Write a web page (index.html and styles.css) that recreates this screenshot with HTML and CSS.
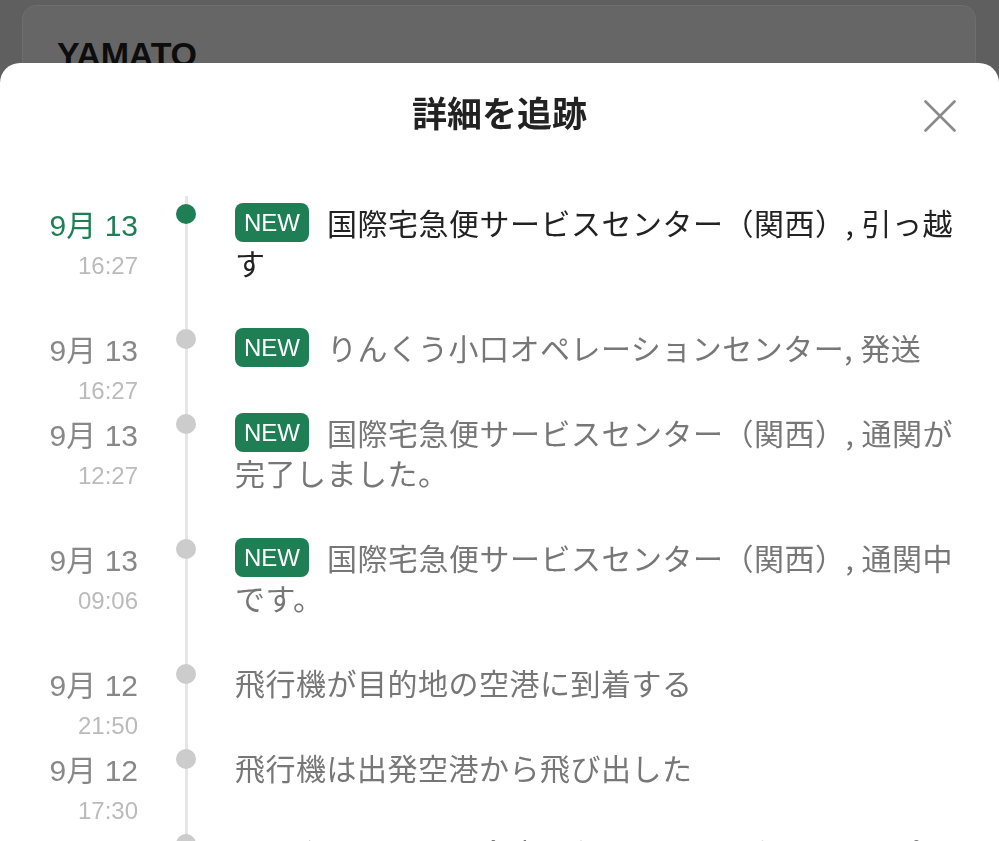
FILE: index.html
```html
<!DOCTYPE html>
<html lang="ja">
<head>
<meta charset="utf-8">
<title>詳細を追跡</title>
<link rel="stylesheet" href="styles.css">
</head>
<body>
<div class="page">
  <div class="card">
    <div class="brand">YAMATO</div>
  </div>
</div>

<div class="sheet">
  <header class="sheet-head">
    <h1 class="title">詳細を追跡</h1>
    <button class="close" aria-label="閉じる">
      <svg width="32" height="32" viewBox="0 0 32 32"><path d="M1.5 1.5 L30.5 30.5 M30.5 1.5 L1.5 30.5" stroke="#8a8a8a" stroke-width="2.6" fill="none" stroke-linecap="round"/></svg>
    </button>
  </header>

  <ol class="timeline">
    <li class="row active">
      <div class="when"><div class="date">9月 13</div><div class="time">16:27</div></div>
      <div class="mark"><span class="dot"></span></div>
      <div class="what"><span class="badge">NEW</span>国際宅急便サービスセンター（関西）, 引っ越す</div>
    </li>
    <li class="row">
      <div class="when"><div class="date">9月 13</div><div class="time">16:27</div></div>
      <div class="mark"><span class="dot"></span></div>
      <div class="what"><span class="badge">NEW</span>りんくう小口オペレーションセンター, 発送</div>
    </li>
    <li class="row">
      <div class="when"><div class="date">9月 13</div><div class="time">12:27</div></div>
      <div class="mark"><span class="dot"></span></div>
      <div class="what"><span class="badge">NEW</span>国際宅急便サービスセンター（関西）, 通関が完了しました。</div>
    </li>
    <li class="row">
      <div class="when"><div class="date">9月 13</div><div class="time">09:06</div></div>
      <div class="mark"><span class="dot"></span></div>
      <div class="what"><span class="badge">NEW</span>国際宅急便サービスセンター（関西）, 通関中です。</div>
    </li>
    <li class="row">
      <div class="when"><div class="date">9月 12</div><div class="time">21:50</div></div>
      <div class="mark"><span class="dot"></span></div>
      <div class="what">飛行機が目的地の空港に到着する</div>
    </li>
    <li class="row">
      <div class="when"><div class="date">9月 12</div><div class="time">17:30</div></div>
      <div class="mark"><span class="dot"></span></div>
      <div class="what">飛行機は出発空港から飛び出した</div>
    </li>
    <li class="row">
      <div class="when"><div class="date">9月 12</div><div class="time">10:15</div></div>
      <div class="mark"><span class="dot"></span></div>
      <div class="what">インターシュール倉庫, パッケージはピックアップされました</div>
    </li>
  </ol>
</div>
</body>
</html>
```

FILE: styles.css
```css
* { box-sizing: border-box; }

html, body {
  margin: 0;
  padding: 0;
  height: 841px;
  overflow: hidden;
}

body {
  background: #5f5f5f;
  font-family: "Liberation Sans", "Noto Sans CJK JP", sans-serif;
}

.page {
  padding: 5px 23px 0 22px;
}

.card {
  height: 400px;
  background: #666666;
  border: 1px solid #6e6e6e;
  border-radius: 14px;
  padding: 28px 0 0 34px;
}

.brand {
  font-size: 34px;
  font-weight: bold;
  color: #0d0d0d;
  line-height: 40px;
  letter-spacing: -0.2px;
}

.sheet {
  position: fixed;
  left: 0;
  right: 0;
  top: 63px;
  bottom: 0;
  background: #ffffff;
  border-radius: 20px 20px 0 0;
  overflow: hidden;
}

.sheet-head {
  display: flex;
  justify-content: center;
  padding-top: 26px;
}

.title {
  margin: 0;
  font-size: 35px;
  line-height: 46px;
  font-weight: bold;
  color: #222222;
  font-family: "Noto Sans CJK JP", sans-serif;
}

.close {
  position: absolute;
  top: 37px;
  right: 43px;
  width: 32px;
  height: 32px;
  padding: 0;
  border: 0;
  background: none;
}

.close svg { display: block; }

.timeline {
  list-style: none;
  margin: 67px 0 0 0;
  padding: 0;
  position: relative;
}

.timeline::before {
  content: "";
  position: absolute;
  left: 185px;
  width: 3px;
  top: -6px;
  bottom: -400px;
  background: #e6e6e6;
}

.row {
  display: grid;
  grid-template-columns: 138px 97px 1fr;
  padding-right: 36px;
  padding-bottom: 45px;
}

.when {
  text-align: right;
  padding-top: 4px;
  height: 40px;
}

.date {
  font-size: 30px;
  line-height: 40px;
  color: #888888;
}

.time {
  font-size: 24px;
  line-height: 40px;
  color: #bbbbbb;
}

.dot {
  position: relative;
  z-index: 1;
  display: block;
  width: 20px;
  height: 20px;
  margin: 2px 0 0 38px;
  border-radius: 50%;
  background: #cccccc;
}

.what {
  font-size: 30px;
  line-height: 40px;
  letter-spacing: 0.5px;
  color: #777777;
  font-family: "Noto Sans CJK JP", sans-serif;
}

.badge {
  display: inline-block;
  vertical-align: top;
  height: 39px;
  line-height: 39px;
  margin-top: 1px;
  padding: 0 9px;
  margin-right: 18px;
  border-radius: 8px;
  background: #1e7f55;
  color: #ffffff;
  letter-spacing: 0;
  font-family: "Liberation Sans", sans-serif;
  font-size: 24px;
}

.active .date { color: #1e7f55; }
.active .dot { background: #1e7f55; }
.active .what { color: #222222; }
```
